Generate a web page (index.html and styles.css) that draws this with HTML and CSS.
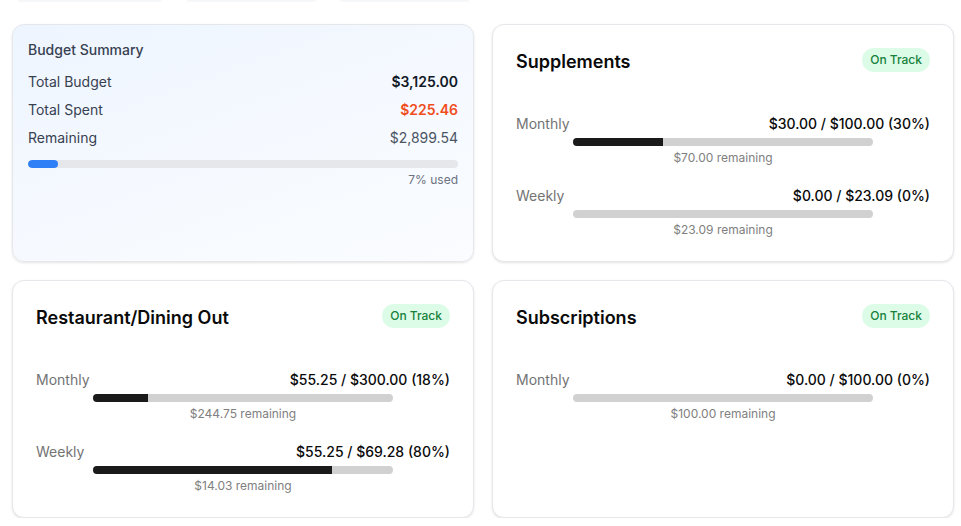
FILE: index.html
```html
<!DOCTYPE html>
<html>
<head>
<meta charset="utf-8">
<link rel="stylesheet" href="styles.css">
</head>
<body>
<div class="prev-strip">
  <span class="seg seg1"></span><span class="seg seg2"></span><span class="seg seg3"></span>
</div>
<main class="grid">
  <section class="card summary">
    <h2 class="summary-title">Budget Summary</h2>
    <div class="sum-rows">
      <div class="sum-row"><span>Total Budget</span><span class="v-total">$3,125.00</span></div>
      <div class="sum-row"><span>Total Spent</span><span class="v-spent">$225.46</span></div>
      <div class="sum-row"><span>Remaining</span><span class="v-rem">$2,899.54</span></div>
    </div>
    <div class="sum-track"><div class="sum-fill" style="width:7%"></div></div>
    <div class="sum-used">7% used</div>
  </section>

  <section class="card cat">
    <header class="cat-head"><h3>Supplements</h3><span class="badge">On Track</span></header>
    <div class="periods">
      <div class="period">
        <div class="p-line"><span class="p-label">Monthly</span><span class="p-val">$30.00 / $100.00 (30%)</span></div>
        <div class="track"><div class="fill" style="width:30%"></div></div>
        <div class="p-rem">$70.00 remaining</div>
      </div>
      <div class="period">
        <div class="p-line"><span class="p-label">Weekly</span><span class="p-val">$0.00 / $23.09 (0%)</span></div>
        <div class="track"><div class="fill" style="width:0%"></div></div>
        <div class="p-rem">$23.09 remaining</div>
      </div>
    </div>
  </section>

  <section class="card cat">
    <header class="cat-head"><h3>Restaurant/Dining Out</h3><span class="badge">On Track</span></header>
    <div class="periods">
      <div class="period">
        <div class="p-line"><span class="p-label">Monthly</span><span class="p-val">$55.25 / $300.00 (18%)</span></div>
        <div class="track"><div class="fill" style="width:18.4%"></div></div>
        <div class="p-rem">$244.75 remaining</div>
      </div>
      <div class="period">
        <div class="p-line"><span class="p-label">Weekly</span><span class="p-val">$55.25 / $69.28 (80%)</span></div>
        <div class="track"><div class="fill" style="width:79.7%"></div></div>
        <div class="p-rem">$14.03 remaining</div>
      </div>
    </div>
  </section>

  <section class="card cat">
    <header class="cat-head"><h3>Subscriptions</h3><span class="badge">On Track</span></header>
    <div class="periods">
      <div class="period">
        <div class="p-line"><span class="p-label">Monthly</span><span class="p-val">$0.00 / $100.00 (0%)</span></div>
        <div class="track"><div class="fill" style="width:0%"></div></div>
        <div class="p-rem">$100.00 remaining</div>
      </div>
    </div>
  </section>
</main>
</body>
</html>
```

FILE: styles.css
```css
* { box-sizing: border-box; }
html, body { margin: 0; padding: 0; background: #ffffff; }
body {
  font-family: Inter, "Noto Sans", "Liberation Sans", sans-serif;
  color: #111827;
  -webkit-font-smoothing: antialiased;
}
.prev-strip {
  height: 2px;
  display: flex;
  padding-left: 18px;
}
.seg { height: 2px; background: #f6f7f8; border-radius: 0 0 2px 2px; }
.seg1 { width: 144px; }
.seg2 { width: 129px; margin-left: 25px; }
.seg3 { width: 129px; margin-left: 24px; }

.grid {
  display: grid;
  grid-template-columns: 462px 462px;
  grid-auto-rows: 238px;
  gap: 18px;
  padding: 22px 0 0 12px;
}
.card {
  border: 1px solid #e5e7eb;
  border-radius: 12px;
  background: #ffffff;
  box-shadow: 0 1px 3px rgba(0,0,0,0.08), 0 1px 2px rgba(0,0,0,0.04);
}
.summary {
  padding: 15px 15px;
  background: linear-gradient(160deg, #eef5ff 0%, #f5f9ff 50%, #fafcff 100%);
}
.summary-title {
  margin: 0;
  font-size: 14px;
  line-height: 20px;
  font-weight: 500;
  color: #374151;
}
.sum-rows { margin-top: 12px; display: flex; flex-direction: column; gap: 8px; }
.sum-row {
  display: flex;
  justify-content: space-between;
  font-size: 14px;
  line-height: 20px;
  color: #374151;
}
.v-total { font-weight: 600; color: #111827; }
.v-spent { font-weight: 600; color: #f04d1c; }
.v-rem { color: #4b5563; }
.sum-track {
  margin-top: 12px;
  height: 8px;
  border-radius: 4px;
  background: #e5e7eb;
  overflow: hidden;
}
.sum-fill { height: 100%; background: #2f80f7; border-radius: 4px; }
.sum-used {
  margin-top: 4px;
  text-align: right;
  font-size: 12px;
  line-height: 16px;
  color: #6b7280;
}

.cat { padding: 23px 23px; }
.cat-head {
  display: flex;
  justify-content: space-between;
  align-items: flex-start;
  height: 28px;
}
.cat-head h3 {
  margin: 0;
  font-size: 18px;
  line-height: 28px;
  font-weight: 600;
  color: #0a0a0a;
}
.badge {
  display: inline-block;
  padding: 4px 8px;
  font-size: 12px;
  line-height: 16px;
  font-weight: 500;
  color: #16803c;
  background: #dcfce7;
  border-radius: 9999px;
}
.periods { margin-top: 38px; display: flex; flex-direction: column; gap: 20px; }
.period { display: flex; flex-direction: column; align-items: center; }
.p-line {
  width: 100%;
  display: flex;
  justify-content: space-between;
  font-size: 14px;
  line-height: 20px;
}
.p-label { color: #737373; }
.p-val { font-weight: 500; color: #0a0a0a; }
.track {
  margin-top: 4px;
  width: 300px;
  height: 8px;
  border-radius: 4px;
  background: #d1d1d1;
  overflow: hidden;
}
.fill { height: 100%; background: #1a1a1a; }
.p-rem {
  margin-top: 4px;
  font-size: 12px;
  line-height: 16px;
  color: #808080;
}
```
